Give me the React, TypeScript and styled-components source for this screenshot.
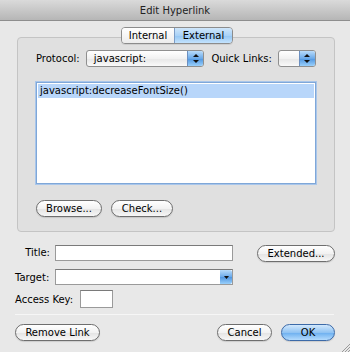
import styled, { createGlobalStyle, css } from 'styled-components';

const GlobalStyle = createGlobalStyle`
  html, body {
    margin: 0;
    padding: 0;
    background: #e8e8e8;
  }
  * {
    box-sizing: border-box;
  }
`;

export const Window = styled.div`
  width: 350px;
  height: 352px;
  background: #e8e8e8;
  font-family: 'DejaVu Sans', 'Liberation Sans', sans-serif;
  font-size: 10px;
  color: #000;
  position: relative;
  overflow: hidden;
`;

export const TitleBar = styled.div`
  height: 21px;
  background: linear-gradient(#dadada, #b6b6b6);
  border-bottom: 1px solid #8e8e8e;
  display: flex;
  align-items: center;
  justify-content: center;
  color: #222;
`;

export const Body = styled.div`
  padding: 16px 15px 0 14px;
`;

export const GroupBox = styled.div`
  margin-left: 3px;
  width: 318px;
  height: 195px;
  background: #e0e0e0;
  border: 1px solid #c4c4c4;
  border-radius: 4px;
  padding: 0 18px 0 18px;
`;

export const Segmented = styled.div`
  display: flex;
  width: 112px;
  height: 17px;
  margin: -11px 0 0 85px;
  border: 1px solid #8c8c8c;
  border-radius: 4px;
  overflow: hidden;
  box-shadow: 0 1px 0 rgba(0, 0, 0, 0.08);
`;

export const Segment = styled.div<{ $active?: boolean }>`
  flex: ${(p) => (p.$active ? '0 0 58px' : '1')};
  display: flex;
  align-items: center;
  justify-content: center;
  background: linear-gradient(#ffffff, #ececec);
  ${(p) =>
    p.$active &&
    css`
      background: linear-gradient(#cfe6fb, #a9d2f7 50%, #93c5f3 51%, #c4e3fd);
      border-left: 1px solid #7b9cc6;
    `}
`;

export const ProtocolRow = styled.div`
  display: flex;
  align-items: center;
  margin-top: 6px;
  height: 17px;
`;

export const Label = styled.span<{ $width?: number; $right?: boolean; $pad?: number }>`
  display: inline-block;
  white-space: nowrap;
  ${(p) => p.$width && `width: ${p.$width}px;`}
  ${(p) => p.$right && 'text-align: right;'}
  ${(p) => p.$pad && `padding-left: ${p.$pad}px;`}
`;

export const Popup = styled.div<{ $width: number }>`
  width: ${(p) => p.$width}px;
  height: 17px;
  border: 1px solid #8f8f8f;
  border-radius: 3px;
  background: linear-gradient(#ffffff, #f1f1f1 50%, #e6e6e6 51%, #fafafa);
  display: flex;
  align-items: center;
  overflow: hidden;
`;

export const PopupText = styled.span`
  flex: 1;
  padding-left: 7px;
`;

export const PopupCap = styled.div`
  width: 16px;
  height: 100%;
  background: linear-gradient(#b9dcfb, #6aa9e9 50%, #4f95e0 51%, #9ad0fb);
  border-left: 1px solid #6b8fc0;
  display: flex;
  align-items: center;
  justify-content: center;
`;

export const LinkList = styled.div`
  margin-top: 15px;
  height: 102px;
  background: #ffffff;
  border: 1px solid #7fa7d8;
  box-shadow: 0 0 0 1px #a9c6ea;
  padding: 1px;
`;

export const LinkRow = styled.div<{ $selected?: boolean }>`
  height: 14px;
  line-height: 14px;
  padding-left: 2px;
  background: ${(p) => (p.$selected ? '#b8d6fa' : 'transparent')};
`;

export const ButtonRow = styled.div`
  display: flex;
  gap: 9px;
  margin-top: 16px;
`;

export const PushButton = styled.div<{ $width: number; $default?: boolean; $lift?: number }>`
  width: ${(p) => p.$width}px;
  height: 17px;
  margin-top: ${(p) => p.$lift ?? 0}px;
  border: 1px solid #6e6e6e;
  border-radius: 9px;
  background: linear-gradient(#ffffff, #f2f2f2 50%, #e3e3e3 51%, #f7f7f7);
  display: flex;
  align-items: center;
  justify-content: center;
  box-shadow: 0 1px 1px rgba(0, 0, 0, 0.12);
  ${(p) =>
    p.$default &&
    css`
      border-color: #3c6aa8;
      background: linear-gradient(#d2e8fc, #90c3f3 50%, #6aaeef 51%, #b4dbfd);
    `}
`;

export const FormArea = styled.div`
  padding: 11px 0 0 1px;
  display: flex;
  flex-direction: column;
`;

export const FormRow = styled.div<{ $top?: number; $gap?: number }>`
  display: flex;
  align-items: center;
  gap: ${(p) => p.$gap ?? 5}px;
  margin-top: ${(p) => p.$top ?? 0}px;
`;

export const TextField = styled.div<{ $width: number; $height?: number }>`
  width: ${(p) => p.$width}px;
  height: ${(p) => p.$height ?? 16}px;
  background: #ffffff;
  border: 1px solid #9a9a9a;
  border-top-color: #7a7a7a;
  display: flex;
  justify-content: flex-end;
`;

export const ComboCap = styled.div`
  width: 12px;
  height: 100%;
  border-radius: 0 2px 2px 0;
  background: linear-gradient(#b9dcfb, #6aa9e9 50%, #4f95e0 51%, #9ad0fb);
  display: flex;
  align-items: center;
  justify-content: center;
`;

export const Spacer = styled.div`
  flex: 1;
`;

export const Separator = styled.div`
  height: 1px;
  background: #a9a9a9;
  margin: 6px 1px 0 0;
  border-bottom: 1px solid #f6f6f6;
`;

export const BottomRow = styled.div`
  display: flex;
  align-items: center;
  gap: 9px;
  margin-top: 9px;
`;

export const Grip = styled.svg`
  position: absolute;
  right: 0;
  bottom: 0;
`;

function UpDown() {
  return (
    <svg width="6" height="9" viewBox="0 0 6 9">
      <path d="M3 0 L6 3 L0 3 Z" fill="#111" />
      <path d="M3 9 L6 6 L0 6 Z" fill="#111" />
    </svg>
  );
}

export default function App() {
  return (
    <Window>
      <GlobalStyle />
      <TitleBar>Edit Hyperlink</TitleBar>
      <Body>
        <GroupBox>
          <Segmented>
            <Segment>Internal</Segment>
            <Segment $active>External</Segment>
          </Segmented>
          <ProtocolRow>
            <Label $width={50}>Protocol:</Label>
            <Popup $width={119}>
              <PopupText>javascript:</PopupText>
              <PopupCap>
                <UpDown />
              </PopupCap>
            </Popup>
            <Label $width={74} $pad={7}>
              Quick Links:
            </Label>
            <Popup $width={38}>
              <PopupText />
              <PopupCap>
                <UpDown />
              </PopupCap>
            </Popup>
          </ProtocolRow>
          <LinkList>
            <LinkRow $selected>javascript:decreaseFontSize()</LinkRow>
          </LinkList>
          <ButtonRow>
            <PushButton $width={66}>Browse...</PushButton>
            <PushButton $width={62}>Check...</PushButton>
          </ButtonRow>
        </GroupBox>
        <FormArea>
          <FormRow>
            <Label $width={35} $right>
              Title:
            </Label>
            <TextField $width={178} />
            <Spacer />
            <PushButton $width={78} $lift={2}>
              Extended...
            </PushButton>
          </FormRow>
          <FormRow $top={7}>
            <Label $width={35}>Target:</Label>
            <TextField $width={178}>
              <ComboCap>
                <svg width="5" height="3" viewBox="0 0 5 3">
                  <path d="M0 0 L5 0 L2.5 3 Z" fill="#111" />
                </svg>
              </ComboCap>
            </TextField>
          </FormRow>
          <FormRow $top={5} $gap={7}>
            <Label>Access Key:</Label>
            <TextField $width={33} $height={18} />
          </FormRow>
          <Separator />
          <BottomRow>
            <PushButton $width={85}>Remove Link</PushButton>
            <Spacer />
            <PushButton $width={55}>Cancel</PushButton>
            <PushButton $width={54} $default>
              OK
            </PushButton>
          </BottomRow>
        </FormArea>
      </Body>
      <Grip width="10" height="10" viewBox="0 0 10 10">
        <path d="M2 10 L10 2 M5 10 L10 5 M8 10 L10 8" stroke="#9a9a9a" strokeWidth="1" />
      </Grip>
    </Window>
  );
}
